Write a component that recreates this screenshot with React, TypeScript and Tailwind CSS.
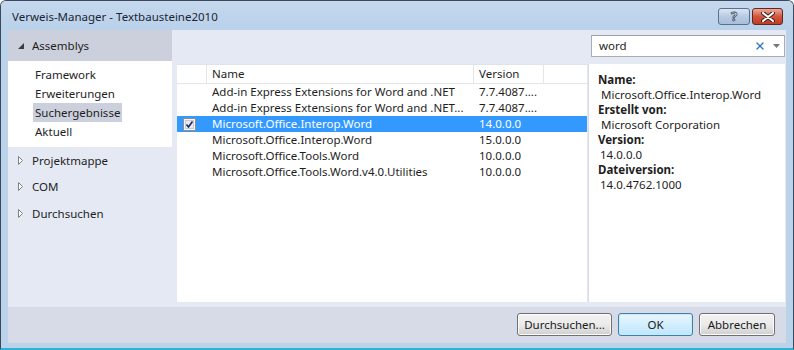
import React from 'react';
import { X } from 'lucide-react';

interface Assembly {
  name: string;
  version: string;
  checked?: boolean;
  selected?: boolean;
}

const rows: Assembly[] = [
  { name: 'Add-in Express Extensions for Word and .NET', version: '7.7.4087....' },
  { name: 'Add-in Express Extensions for Word and .NET...', version: '7.7.4087....' },
  { name: 'Microsoft.Office.Interop.Word', version: '14.0.0.0', checked: true, selected: true },
  { name: 'Microsoft.Office.Interop.Word', version: '15.0.0.0' },
  { name: 'Microsoft.Office.Tools.Word', version: '10.0.0.0' },
  { name: 'Microsoft.Office.Tools.Word.v4.0.Utilities', version: '10.0.0.0' },
];

const font = { fontFamily: '"Segoe UI", "Noto Sans", sans-serif' };

// small expanded / collapsed arrows of the tree
const Expanded = () => (
  <svg width="6" height="6" viewBox="0 0 6 6" className="shrink-0">
    <polygon points="6,0 6,6 0,6" fill="#3c3c3c" />
  </svg>
);

const Collapsed = () => (
  <svg width="5" height="9" viewBox="0 0 5 9" className="shrink-0">
    <polygon points="0.5,0.5 4.5,4.5 0.5,8.5" fill="#fff" stroke="#808080" />
  </svg>
);

const CheckBox = () => (
  <svg width="13" height="13" viewBox="0 0 13 13">
    <rect x="0.5" y="0.5" width="12" height="12" fill="#f4f4f4" stroke="#8f8f8f" />
    <rect x="2.5" y="2.5" width="8" height="8" fill="#e8ecf2" stroke="#c6cbd3" />
    <path d="M3.5 6.5 L5.5 9 L9.5 3.5" fill="none" stroke="#21216b" strokeWidth="1.6" />
  </svg>
);

const Button = ({ label, w, primary }: { label: string; w: string; primary?: boolean }) => (
  <div
    className={`${w} h-[23px] flex items-center justify-center rounded-[3px] border text-[11.5px] text-[#1a1a1a] ${
      primary
        ? 'border-[#3c7fb1] bg-gradient-to-b from-[#eaf6fd] to-[#bee6fd] shadow-[inset_0_0_0_1px_#c6ecfb]'
        : 'border-[#707070] bg-gradient-to-b from-[#f2f2f2] via-[#ebebeb] to-[#cfcfcf] shadow-[inset_0_0_0_1px_#fbfbfb]'
    }`}
  >
    {label}
  </div>
);

export default function App() {
  return (
    <div
      className="w-[794px] h-[350px] flex flex-col bg-[#bad2ea] border border-[#3a4a5c] rounded-t-[6px] overflow-hidden border-b-[2px] border-b-[#2fb0d4]"
      style={font}
    >
      {/* title bar */}
      <div className="h-[29px] shrink-0 flex items-center justify-between pl-[11px] pr-[10px] bg-gradient-to-b from-[#c5d8ed] to-[#b9d1ea]">
        <span className="text-[11.5px] text-[#1b2533] pt-[2px]">Verweis-Manager - Textbausteine2010</span>
        <div className="flex gap-[2px] pt-[2px]">
          <div className="w-[32px] h-[17px] rounded-[3px] border border-[#5b6f8a] bg-gradient-to-b from-[#dbe6f3] via-[#b8cbe2] to-[#a7bfdc] flex items-center justify-center">
            <span className="text-[13px] font-bold leading-none text-white [-webkit-text-stroke:0.8px_#3b4a60]">?</span>
          </div>
          <div className="w-[31px] h-[17px] rounded-[3px] border border-[#5c2a22] bg-gradient-to-b from-[#e9a99b] via-[#d2553d] to-[#c13c22] flex items-center justify-center">
            <svg width="14" height="10" viewBox="0 0 14 10">
              <path d="M2 1 L12 9 M12 1 L2 9" stroke="#3a1e1a" strokeWidth="4" strokeLinecap="round" />
              <path d="M2 1 L12 9 M12 1 L2 9" stroke="#fff" strokeWidth="2.2" strokeLinecap="round" />
            </svg>
          </div>
        </div>
      </div>

      {/* client area */}
      <div className="flex-1 flex flex-col mx-[7px] mb-[5px]">
        <div className="flex h-[277px] bg-[#e4e9f4]">
          {/* left navigation */}
          <div className="w-[164px] flex flex-col text-[11.5px] text-[#1e1e1e]">
            <div className="h-[31px] bg-[#ccd0dc] flex items-center gap-[8px] pl-[10px]">
              <Expanded />
              <span>Assemblys</span>
            </div>
            <div className="bg-white h-[86px] flex flex-col pt-[4px] pl-[25px]">
              {['Framework', 'Erweiterungen', 'Suchergebnisse', 'Aktuell'].map((item) => (
                <div key={item} className="h-[19px] flex items-center">
                  <span className={`px-[2px] h-[19px] flex items-center ${item === 'Suchergebnisse' ? 'bg-[#ccd0dc]' : ''}`}>
                    {item}
                  </span>
                </div>
              ))}
            </div>
            <div className="flex flex-col">
              {['Projektmappe', 'COM', 'Durchsuchen'].map((item) => (
                <div key={item} className="h-[26.5px] flex items-center gap-[9px] pl-[10px]">
                  <Collapsed />
                  <span>{item}</span>
                </div>
              ))}
            </div>
          </div>

          {/* list + details */}
          <div className="flex-1 flex flex-col pl-[5px] pr-[1px] pb-[5px]">
            <div className="h-[34px] flex justify-end items-start pt-[5px]">
              <div className="w-[194px] h-[22px] bg-white border border-[#abadb3] border-t-[#9ea2aa] flex items-center pl-[7px] pr-[4px] text-[11.5px] text-[#1e1e1e]">
                <span className="flex-1">word</span>
                <X size={12} strokeWidth={2.6} className="text-[#2f6fbf] mr-[7px]" />
                <svg width="7" height="4" viewBox="0 0 7 4">
                  <polygon points="0,0 7,0 3.5,4" fill="#777" />
                </svg>
              </div>
            </div>
            <div className="flex-1 flex bg-white">
              {/* assembly list */}
              <div className="w-[411px] flex flex-col text-[11.5px] text-[#1e1e1e] border-r border-[#e3e6ee]">
                <div className="h-[20px] flex border-b border-[#e5e5e5] border-t border-t-[#dfe3ea]">
                  <div className="w-[30px] border-r border-[#e5e5e5]" />
                  <div className="w-[267px] border-r border-[#e5e5e5] pl-[5px] flex items-center">Name</div>
                  <div className="w-[70px] border-r border-[#e5e5e5] pl-[5px] flex items-center">Version</div>
                  <div className="flex-1" />
                </div>
                {rows.map((r, i) => (
                  <div
                    key={i}
                    className={`h-[16px] flex items-center ${r.selected ? 'bg-[#3399ff] text-white' : ''}`}
                  >
                    <div className="w-[30px] flex items-center pl-[6px]">{r.checked && <CheckBox />}</div>
                    <div className="w-[267px] pl-[5px] whitespace-nowrap overflow-hidden">{r.name}</div>
                    <div className="w-[70px] pl-[5px] whitespace-nowrap">{r.version}</div>
                  </div>
                ))}
              </div>
              {/* details */}
              <div className="flex-1 flex flex-col pt-[8px] pl-[9px] text-[11.5px] leading-[15px] text-[#1e1e1e] border-l border-[#dadde4]">
                <span className="font-bold">Name:</span>
                <span className="pl-[3px]">Microsoft.Office.Interop.Word</span>
                <span className="font-bold">Erstellt von:</span>
                <span className="pl-[3px]">Microsoft Corporation</span>
                <span className="font-bold">Version:</span>
                <span className="pl-[2px]">14.0.0.0</span>
                <span className="font-bold">Dateiversion:</span>
                <span className="pl-[2px]">14.0.4762.1000</span>
              </div>
            </div>
          </div>
        </div>

        {/* bottom buttons */}
        <div className="flex-1 bg-[#d6dbe7] flex items-start justify-end pt-[6px] pr-[11px] gap-[6px]">
          <Button label="Durchsuchen..." w="w-[95px]" />
          <Button label="OK" w="w-[75px]" primary />
          <Button label="Abbrechen" w="w-[76px]" />
        </div>
      </div>
    </div>
  );
}
